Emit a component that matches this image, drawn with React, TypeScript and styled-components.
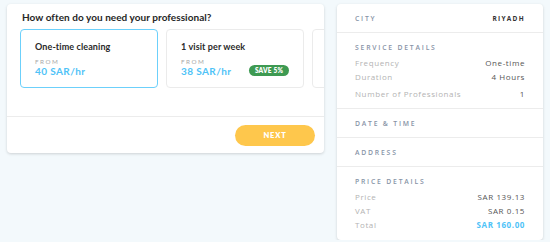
import styled, { createGlobalStyle } from 'styled-components';

const Global = createGlobalStyle`
  body {
    margin: 0;
    background: #f3f9fc;
    font-family: Lato, "Open Sans", sans-serif;
  }
`;

const Page = styled.div`
  display: flex;
  align-items: flex-start;
  gap: 13px;
  padding: 4px 6px 0 7px;
`;

const MainCard = styled.div`
  width: 317px;
  background: #fff;
  border-radius: 4px;
  box-shadow: 0 1px 3px rgba(0, 0, 0, 0.16);
  overflow: hidden;
`;

const Body = styled.div`
  padding: 7px 0 28px 15px;
  border-bottom: 1px solid #ececec;
`;

const Question = styled.h2`
  margin: 0 0 6px;
  font-size: 10px;
  line-height: 12px;
  font-weight: 700;
  color: #262626;
  letter-spacing: 0.05px;
`;

const Options = styled.div`
  display: flex;
  gap: 8px;
  margin-left: -2px;
`;

const Option = styled.div<{ $active?: boolean }>`
  flex: 0 0 138px;
  height: 59px;
  box-sizing: border-box;
  padding: 12px 14px 0;
  border: 1px solid ${({ $active }) => ($active ? '#6cd0fb' : '#ebebeb')};
  border-radius: 4px;
`;

const OptionTitle = styled.div`
  font-size: 9px;
  line-height: 10px;
  font-weight: 700;
  color: #2a2a2a;
  letter-spacing: 0.1px;
  margin-bottom: 6px;
`;

const From = styled.div`
  font-size: 6.3px;
  line-height: 7px;
  letter-spacing: 1.5px;
  color: #a8a8a8;
`;

const PriceRow = styled.div`
  display: flex;
  align-items: center;
  justify-content: space-between;
  height: 11px;
`;

const Rate = styled.span`
  font-size: 10px;
  font-weight: 700;
  color: #4fc3f7;
  letter-spacing: 0.4px;
`;

const Badge = styled.span`
  display: inline-flex;
  align-items: center;
  justify-content: center;
  width: 40px;
  height: 11px;
  border-radius: 6px;
  background: #3e9a52;
  color: #fff;
  font-size: 6.5px;
  font-weight: 800;
  letter-spacing: 0.2px;
`;

const Footer = styled.div`
  display: flex;
  justify-content: flex-end;
  padding: 8px 9px 7px;
`;

const NextButton = styled.button`
  width: 80px;
  height: 21px;
  border: none;
  border-radius: 11px;
  background: #fec74c;
  color: #fff;
  font-family: Lato, sans-serif;
  font-size: 7.5px;
  font-weight: 800;
  letter-spacing: 0.8px;
`;

const Summary = styled.div`
  width: 206px;
  background: #fff;
  border-radius: 4px;
  box-shadow: 0 1px 3px rgba(0, 0, 0, 0.16);
  font-family: "Open Sans", sans-serif;
`;

const Section = styled.div<{ $pb?: number }>`
  padding: 10px 18px ${({ $pb }) => $pb ?? 10}px;
  border-bottom: 1px solid #ececec;
  &:last-child {
    border-bottom: none;
  }
`;

const HeadRow = styled.div`
  display: flex;
  justify-content: space-between;
  height: 8px;
  align-items: center;
`;

const Heading = styled.span`
  font-size: 6.8px;
  letter-spacing: 1.8px;
  color: #8793a6;
  font-weight: 600;
`;

const HeadValue = styled.span`
  font-size: 6.5px;
  letter-spacing: 1.3px;
  color: #333;
  font-weight: 700;
`;

const Rows = styled.div`
  margin-top: 4px;
`;

const Row = styled.div<{ $gap?: number }>`
  display: flex;
  justify-content: space-between;
  align-items: center;
  height: 14px;
  margin-top: ${({ $gap }) => $gap ?? 0}px;
  font-size: 8px;
  letter-spacing: 0.6px;
`;

const Key = styled.span`
  color: #b3b3b3;
`;

const Val = styled.span<{ $total?: boolean }>`
  color: ${({ $total }) => ($total ? '#4fc3f7' : '#555')};
  font-weight: ${({ $total }) => ($total ? 700 : 400)};
`;

export default function App() {
  return (
    <>
      <Global />
      <Page>
        <MainCard>
          <Body>
            <Question>How often do you need your professional?</Question>
            <Options>
              <Option $active>
                <OptionTitle>One-time cleaning</OptionTitle>
                <From>FROM</From>
                <PriceRow>
                  <Rate>40 SAR/hr</Rate>
                </PriceRow>
              </Option>
              <Option>
                <OptionTitle>1 visit per week</OptionTitle>
                <From>FROM</From>
                <PriceRow>
                  <Rate>38 SAR/hr</Rate>
                  <Badge>SAVE 5%</Badge>
                </PriceRow>
              </Option>
              {/* next option peeks in from the right edge */}
              <Option />
            </Options>
          </Body>
          <Footer>
            <NextButton>NEXT</NextButton>
          </Footer>
        </MainCard>

        <Summary>
          <Section>
            <HeadRow>
              <Heading>CITY</Heading>
              <HeadValue>RIYADH</HeadValue>
            </HeadRow>
          </Section>
          <Section $pb={8}>
            <HeadRow>
              <Heading>SERVICE DETAILS</Heading>
            </HeadRow>
            <Rows>
              <Row>
                <Key>Frequency</Key>
                <Val>One-time</Val>
              </Row>
              <Row>
                <Key>Duration</Key>
                <Val>4 Hours</Val>
              </Row>
              <Row $gap={3}>
                <Key>Number of Professionals</Key>
                <Val>1</Val>
              </Row>
            </Rows>
          </Section>
          <Section>
            <HeadRow>
              <Heading>DATE &amp; TIME</Heading>
            </HeadRow>
          </Section>
          <Section>
            <HeadRow>
              <Heading>ADDRESS</Heading>
            </HeadRow>
          </Section>
          <Section $pb={9}>
            <HeadRow>
              <Heading>PRICE DETAILS</Heading>
            </HeadRow>
            <Rows>
              <Row>
                <Key>Price</Key>
                <Val>SAR 139.13</Val>
              </Row>
              <Row>
                <Key>VAT</Key>
                <Val>SAR 0.15</Val>
              </Row>
              <Row>
                <Key>Total</Key>
                <Val $total>SAR 160.00</Val>
              </Row>
            </Rows>
          </Section>
        </Summary>
      </Page>
    </>
  );
}
